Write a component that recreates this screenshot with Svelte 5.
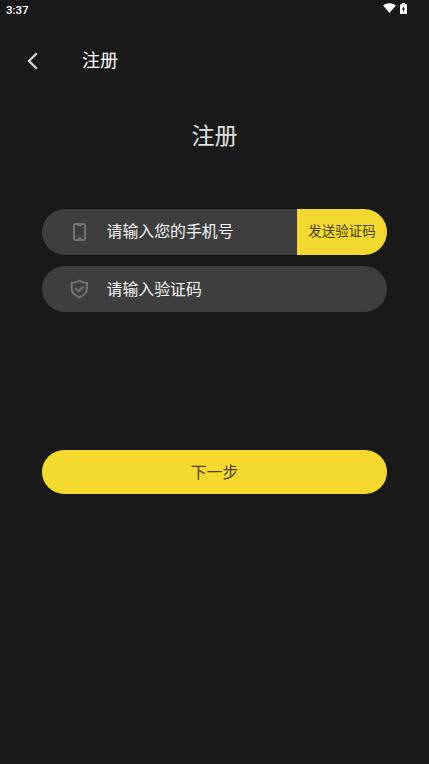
<script lang="ts">
  let phone = $state('');
  let code = $state('');
</script>

<div class="screen">
  <div class="status-bar">
    <span class="time">3:37</span>
    <div class="status-icons">
      <svg width="13" height="10" viewBox="0 0 13 10">
        <path d="M0.2 2.5C3.7-.5 9.3-.5 12.8 2.5L6.5 10Z" fill="#fff" />
      </svg>
      <svg width="7" height="11" viewBox="0 0 7 11">
        <path d="M2 0h3v1.2h1.2q.8 0 .8.8v8.2q0 .8-.8.8H.8q-.8 0-.8-.8V2q0-.8.8-.8H2Z" fill="#fff" />
        <path d="M3.9 3L1.9 6.5h1.2v2.5L5.1 5.5H3.9Z" fill="#191919" />
      </svg>
    </div>
  </div>

  <header class="nav">
    <button type="button" class="back" aria-label="返回">
      <svg width="12" height="18" viewBox="0 0 12 18" fill="none">
        <path d="M9.8 1.2L2 9L9.8 16.8" stroke="#d6d6d6" stroke-width="2.3" />
      </svg>
    </button>
    <span class="nav-title">注册</span>
  </header>

  <h1>注册</h1>

  <form onsubmit={(e) => e.preventDefault()}>
    <div class="field">
      <svg class="icon" width="20" height="20" viewBox="0 0 20 20" fill="none" stroke="#747474">
        <rect x="5" y="1.9" width="11" height="16.2" rx="1.3" stroke-width="2" />
        <path d="M8 3.2h5M8.8 16.2h3.4" stroke-width="1.8" />
      </svg>
      <input type="tel" bind:value={phone} placeholder="请输入您的手机号" />
      <button type="button" class="send">发送验证码</button>
    </div>

    <div class="field">
      <svg class="icon" width="20" height="20" viewBox="0 0 20 20" fill="none" stroke="#747474" stroke-width="2" stroke-linejoin="round">
        <path d="M10.3 1.5C8 3.2 5.5 4 2.7 4.1V9.5C2.7 13.500 5.500 16.500 10.300 18.300C15.100 16.500 17.900 13.500 17.900 9.500V4.100C15.100 4 12.600 3.200 10.300 1.500Z" />
        <path d="M6.4 9.200L9.600 12.200L14.600 7.600" />
      </svg>
      <input class="code" type="text" bind:value={code} placeholder="请输入验证码" />
    </div>

    <button type="submit" class="next">下一步</button>
  </form>
</div>

<style>
  :global(body) {
    background: #191919;
  }

  .screen {
    box-sizing: border-box;
    height: 764px;
    background: #191919;
    color: #fff;
    font-family: "Noto Sans CJK SC", sans-serif;
    overflow: hidden;
  }

  .status-bar {
    display: flex;
    justify-content: space-between;
    align-items: center;
    height: 18px;
    padding: 0 22px 0 6px;
  }

  .time {
    font: 500 11.5px/18px Roboto, sans-serif;
    padding-top: 1px;
  }

  .status-icons {
    display: flex;
    align-items: center;
    gap: 4px;
    padding-bottom: 2px;
  }

  .nav {
    display: flex;
    align-items: center;
    height: 86px;
    padding-left: 27px;
  }

  .back {
    display: flex;
    width: 55px;
  }

  .nav-title {
    font-size: 18px;
    line-height: 26px;
    padding-bottom: 4px;
  }

  h1 {
    margin: 13px 0 0;
    color: #e0e0e0;
    font-size: 23px;
    font-weight: 400;
    line-height: 34px;
    text-align: center;
  }

  form {
    display: flex;
    flex-direction: column;
    gap: 11.5px;
    padding: 57.5px 42px 0;
  }

  .field {
    display: flex;
    align-items: center;
    height: 46px;
    padding-left: 27px;
    border-radius: 23px;
    background: #3e3e3e;
    overflow: hidden;
  }

  .icon {
    flex: none;
    margin-right: 17.5px;
  }

  input {
    flex: 1;
    min-width: 0;
    padding: 0 0 3px;
    border: none;
    outline: none;
    background: none;
    color: #fff;
    font: inherit;
    font-size: 15.9px;
  }

  .code {
    padding-bottom: 1px;
  }

  input::placeholder {
    color: #f4f4f4;
    opacity: 1;
  }

  button {
    padding: 0;
    border: none;
    background: none;
    font-family: inherit;
    cursor: pointer;
  }

  .send {
    width: 90px;
    height: 100%;
    padding-bottom: 4px;
    background: #f4d92e;
    color: #4a4010;
    font-size: 13.5px;
  }

  .next {
    height: 44.5px;
    margin-top: 126px;
    border-radius: 23px;
    background: #f4d92e;
    color: #4a4010;
    font-size: 15.8px;
  }
</style>
